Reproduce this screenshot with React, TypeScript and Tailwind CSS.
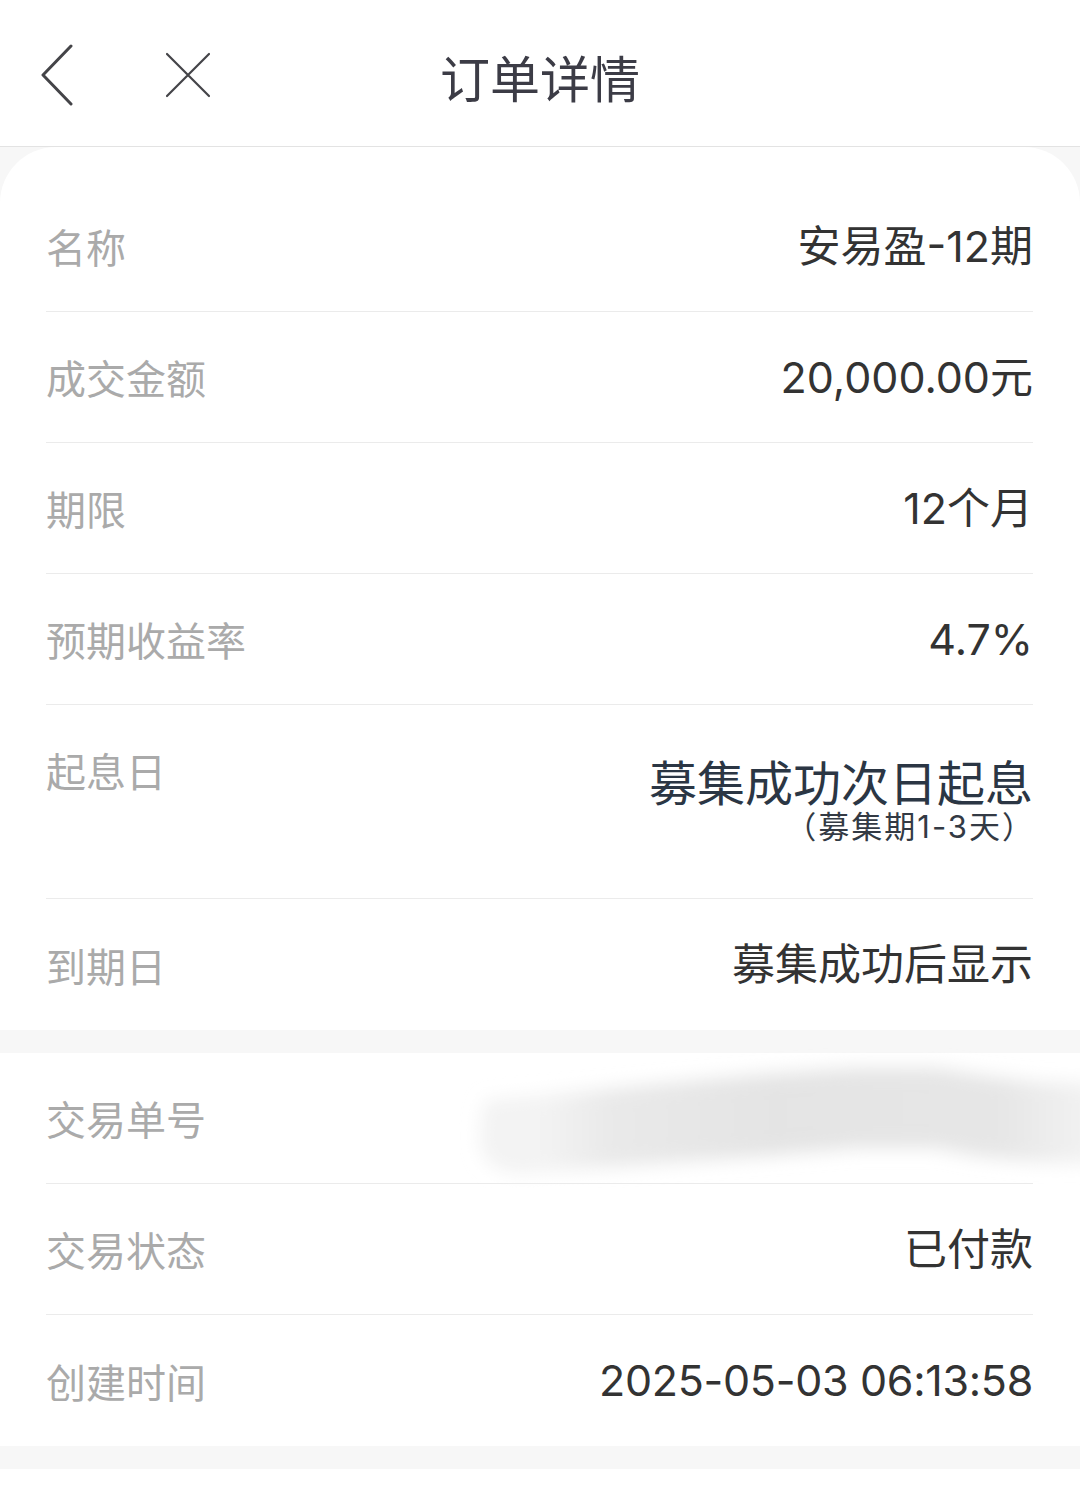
import React from "react";

const CJK = "font-['Noto_Sans_CJK_SC',sans-serif]";
const VAL = "font-['Inter','Noto_Sans_CJK_SC',sans-serif]";

function Row({
  label,
  value,
  last,
}: {
  label: string;
  value: React.ReactNode;
  last?: boolean;
}) {
  return (
    <div
      className={`h-[131px] flex items-center justify-between ${
        last ? "" : "border-b border-[#ebebeb]"
      }`}
    >
      <span className={`${CJK} text-[40px] leading-[40px] text-[#aaaaaa]`}>{label}</span>
      <span className={`${VAL} text-[43px] leading-[43px] text-[#333333]`}>{value}</span>
    </div>
  );
}

function Smear() {
  return (
    <svg
      className="absolute left-[350px] top-[-5px] pointer-events-none"
      width="740"
      height="140"
      viewBox="0 0 740 140"
    >
      <defs>
        <filter id="blurf" x="-20%" y="-40%" width="140%" height="180%">
          <feGaussianBlur stdDeviation="9" />
        </filter>
        <linearGradient id="fade" x1="0" y1="0" x2="1" y2="0">
          <stop offset="0.1" stopColor="#f3f3f3" />
          <stop offset="0.2" stopColor="#e9e9e9" />
          <stop offset="0.45" stopColor="#e4e4e4" />
          <stop offset="0.8" stopColor="#e6e6e6" />
          <stop offset="1" stopColor="#f8f8f8" />
        </linearGradient>
      </defs>
      <path
        d="M90 52 L200 42 L280 34 L370 26 L460 20 L540 20 L590 28 L640 34 L735 36 L735 116 L640 114 L580 108 L540 100 L460 100 L370 108 L280 114 L200 120 L120 126 Q82 120 84 88 Q86 58 90 52 Z"
        fill="url(#fade)"
        filter="url(#blurf)"
      />
    </svg>
  );
}

export default function App() {
  return (
    <div className="w-[1080px] min-h-[1488px] bg-white overflow-hidden">
      {/* Header */}
      <div className="h-[147px] border-b border-[#e3e3e3] bg-white grid grid-cols-[1fr_auto_1fr] items-center">
        <div className="flex items-center pl-[40px]">
          <svg width="36" height="62" viewBox="0 0 36 62" className="mt-[4px]">
            <path
              d="M31 2 L3 31 L31 60"
              fill="none"
              stroke="#444448"
              strokeWidth="3"
              strokeLinecap="round"
              strokeLinejoin="round"
            />
          </svg>
          <svg width="48" height="48" viewBox="0 0 48 48" className="ml-[88px] mt-[4px]">
            <path
              d="M3 3 L45 45 M45 3 L3 45"
              fill="none"
              stroke="#444448"
              strokeWidth="2.2"
              strokeLinecap="round"
            />
          </svg>
        </div>
        <div className={`${CJK} text-[50px] leading-[50px] text-[#3c3c46] pt-[6px]`}>订单详情</div>
        <div />
      </div>

      {/* Body */}
      <div className="bg-[#f7f7f7] pb-[23px]">
        <div className="bg-white rounded-t-[56px] pl-[46px] pr-[47px] pt-[34px]">
          <Row label="名称" value="安易盈-12期" />
          <Row label="成交金额" value="20,000.00元" />
          <Row label="期限" value="12个月" />
          <Row label="预期收益率" value="4.7%" />
          <div className="h-[194px] flex items-start justify-between border-b border-[#ebebeb]">
            <span className={`${CJK} text-[40px] leading-[40px] text-[#aaaaaa] pt-[45px]`}>起息日</span>
            <div className="flex flex-col items-end pt-[51px]">
              <span className={`${CJK} text-[48px] leading-[48px] text-[#2b3644]`}>募集成功次日起息</span>
              <span
                className={`${VAL} text-[31px] leading-[32px] text-[#333a44] mt-[7px] tracking-[2px] mr-[-2px]`}
              >
                <span className="[font-feature-settings:'halt']">（</span>募集期1-3天）
              </span>
            </div>
          </div>
          <Row label="到期日" value="募集成功后显示" last />
        </div>

        <div className="bg-white mt-[23px] pl-[46px] pr-[47px]">
          <div className="relative">
            <Row label="交易单号" value="" />
            <Smear />
          </div>
          <Row label="交易状态" value="已付款" />
          <Row label="创建时间" value={<span className="tracking-[-0.3px]">2025-05-03 06:13:58</span>} last />
        </div>
      </div>
      <div className="h-[20px] bg-white" />
    </div>
  );
}
